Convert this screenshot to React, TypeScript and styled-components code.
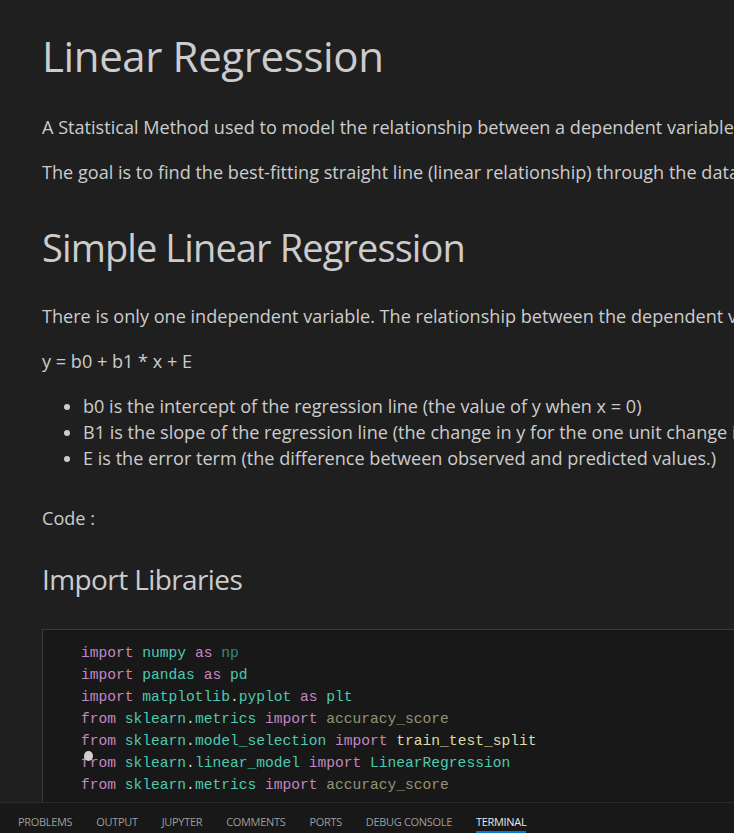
import React from "react";
import styled, { createGlobalStyle } from "styled-components";

const Global = createGlobalStyle`
  html, body { margin: 0; padding: 0; background: #1f1f1f; }
  #root { width: 734px; height: 833px; }
`;

const Shell = styled.div`
  width: 734px;
  height: 833px;
  display: flex;
  flex-direction: column;
  background: #1f1f1f;
  overflow: hidden;
  font-family: "Open Sans", "Noto Sans", sans-serif;
  color: #cccccc;
`;

const Preview = styled.div`
  flex: 1;
  min-height: 0;
  overflow: hidden;
  display: flex;
  flex-direction: column;
  padding: 30px 0 0 42px;
  white-space: nowrap;
`;

const H1 = styled.h1`
  margin: 0;
  font-size: 42px;
  letter-spacing: -0.38px;
  line-height: 52px;
  font-weight: 400;
`;

const H2 = styled.h2<{ $top: number }>`
  margin: ${(p) => p.$top}px 0 0;
  font-size: 38px;
  letter-spacing: -0.9px;
  line-height: 48px;
  font-weight: 400;
`;

const H3 = styled.h3<{ $top: number }>`
  margin: ${(p) => p.$top}px 0 0;
  font-size: 28px;
  letter-spacing: -0.6px;
  line-height: 38px;
  font-weight: 400;
`;

const P = styled.p<{ $top: number }>`
  margin: ${(p) => p.$top}px 0 0;
  font-size: 18.1px;
  line-height: 27px;
`;

const List = styled.ul`
  margin: 18px 0 0;
  padding: 0 0 0 41px;
  font-size: 18.1px;
  line-height: 26px;
  list-style: disc;
`;

const Item = styled.li`
  padding-left: 0;
`;

const CodeCell = styled.div`
  position: relative;
  margin-top: 31px;
  flex-shrink: 0;
  border: 1px solid #3a3a3a;
  border-right: none;
  background: #181818;
  padding: 12px 0 14px 38px;
  font-family: "Liberation Mono", "DejaVu Sans Mono", monospace;
  font-size: 14.6px;
  line-height: 22px;
  color: #d4d4d4;
`;

const CodeLine = styled.div`
  white-space: pre;
`;

const Tok = styled.span<{ $c: string; $dim?: boolean }>`
  color: ${(p) => p.$c};
  opacity: ${(p) => (p.$dim ? 0.62 : 1)};
`;

const Pointer = styled.div`
  position: absolute;
  left: 41px;
  top: 121px;
  width: 9px;
  height: 10px;
  border-radius: 50%;
  background: #cfcfcf;
`;

const Panel = styled.div`
  height: 30px;
  flex-shrink: 0;
  border-top: 1px solid #2b2b2b;
  background: #181818;
  display: flex;
  align-items: stretch;
  gap: 24px;
  padding-left: 18px;
`;

const Tab = styled.div<{ $active?: boolean }>`
  display: flex;
  align-items: center;
  padding-top: 8px;
  font-family: "Open Sans", "Noto Sans", sans-serif;
  font-size: 11px;
  letter-spacing: -0.32px;
  text-transform: uppercase;
  color: ${(p) => (p.$active ? "#e7e7e7" : "#9d9d9d")};
  border-bottom: 2px solid ${(p) => (p.$active ? "#0078d4" : "transparent")};
`;

const KW = "#c586c0";
const MOD = "#4ec9b0";
const FN = "#dcdcaa";
const PLAIN = "#d4d4d4";

type T = [string, string?, boolean?];
const code: T[][] = [
  [["import", KW], [" "], ["numpy", MOD], [" "], ["as", KW], [" "], ["np", MOD, true]],
  [["import", KW], [" "], ["pandas", MOD], [" "], ["as", KW], [" "], ["pd", MOD]],
  [["import", KW], [" "], ["matplotlib", MOD], [".", PLAIN], ["pyplot", MOD], [" "], ["as", KW], [" "], ["plt", MOD]],
  [["from", KW], [" "], ["sklearn", MOD], [".", PLAIN], ["metrics", MOD], [" "], ["import", KW], [" "], ["accuracy_score", FN, true]],
  [["from", KW], [" "], ["sklearn", MOD], [".", PLAIN], ["model_selection", MOD], [" "], ["import", KW], [" "], ["train_test_split", FN]],
  [["from", KW], [" "], ["sklearn", MOD], [".", PLAIN], ["linear_model", MOD], [" "], ["import", KW], [" "], ["LinearRegression", MOD]],
  [["from", KW], [" "], ["sklearn", MOD], [".", PLAIN], ["metrics", MOD], [" "], ["import", KW], [" "], ["accuracy_score", FN, true]],
];

const tabs = ["Problems", "Output", "Jupyter", "Comments", "Ports", "Debug Console", "Terminal"];

export default function App() {
  return (
    <>
      <Global />
      <Shell>
        <Preview>
          <H1>Linear Regression</H1>
          <P $top={32}>
            A Statistical Method used to model the relationship between a dependent variable and one or more independent variables.
          </P>
          <P $top={18}>
            The goal is to find the best-fitting straight line (linear relationship) through the data points.
          </P>
          <H2 $top={37}>Simple Linear Regression</H2>
          <P $top={32}>
            There is only one independent variable. The relationship between the dependent variable and the independent variable is linear.
          </P>
          <P $top={18}>y = b0 + b1 * x + E</P>
          <List>
            <Item>b0 is the intercept of the regression line (the value of y when x = 0)</Item>
            <Item>B1 is the slope of the regression line (the change in y for the one unit change in x)</Item>
            <Item>E is the error term (the difference between observed and predicted values.)</Item>
          </List>
          <P $top={34}>Code :</P>
          <H3 $top={28}>Import Libraries</H3>
          <CodeCell>
            {code.map((line, i) => (
              <CodeLine key={i}>
                {line.map(([t, c, dim], j) =>
                  c ? (
                    <Tok key={j} $c={c} $dim={dim}>
                      {t}
                    </Tok>
                  ) : (
                    <React.Fragment key={j}>{t}</React.Fragment>
                  )
                )}
              </CodeLine>
            ))}
            <Pointer />
          </CodeCell>
        </Preview>
        <Panel>
          {tabs.map((t) => (
            <Tab key={t} $active={t === "Terminal"}>
              {t}
            </Tab>
          ))}
        </Panel>
      </Shell>
    </>
  );
}
